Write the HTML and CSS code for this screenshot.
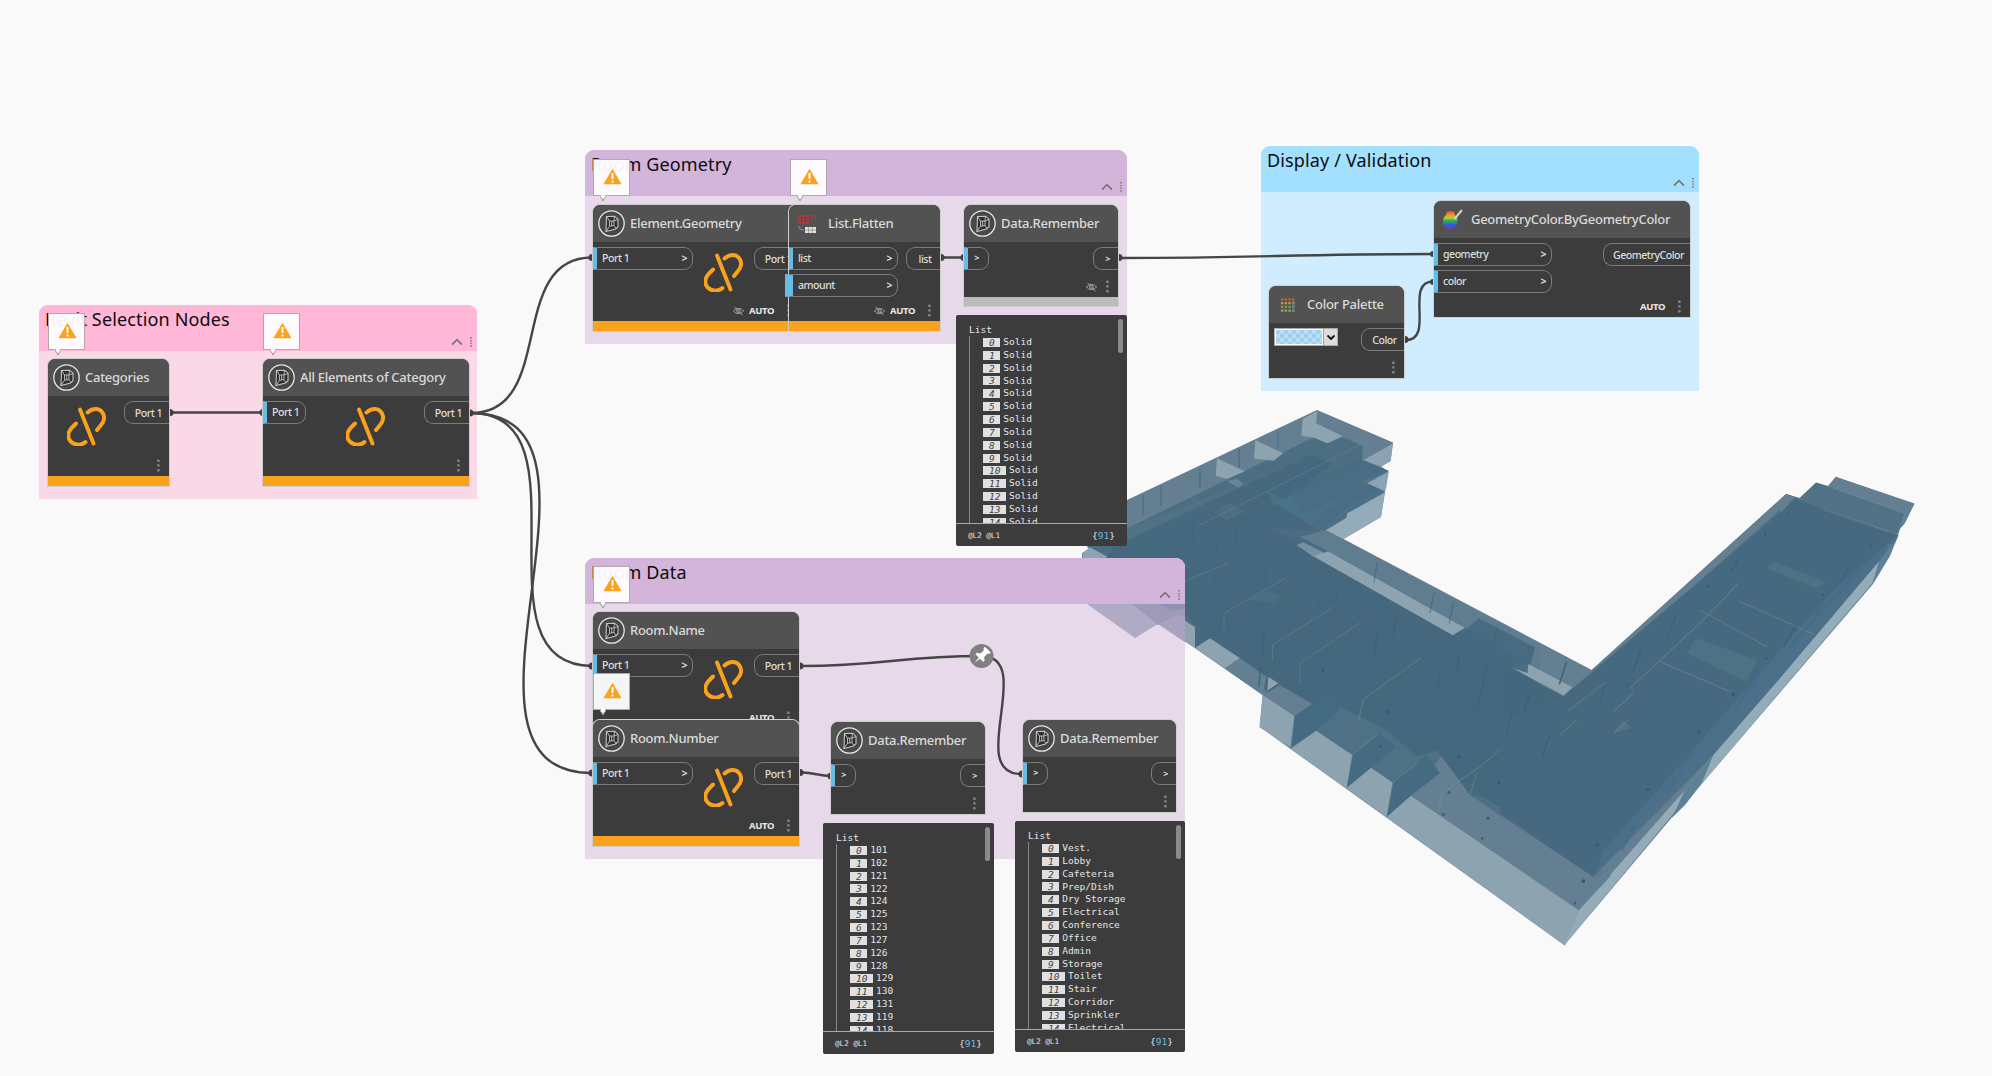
FILE: index.html
```html
<!DOCTYPE html>
<html lang="en">
<head>
<meta charset="utf-8">
<title>Room graph</title>
<link rel="stylesheet" href="styles.css">
</head>
<body>
<svg class="defs" width="0" height="0" aria-hidden="true">
  <defs>
    <linearGradient id="rainbow" x1="0" y1="0" x2="0" y2="1">
      <stop offset="0" stop-color="#e8402c"/><stop offset=".2" stop-color="#f0902c"/><stop offset=".38" stop-color="#b8d030"/><stop offset=".55" stop-color="#2fae4a"/><stop offset=".75" stop-color="#2c5fe0"/><stop offset="1" stop-color="#7a2fd0"/>
    </linearGradient>
    <pattern id="checks" width="8" height="8" patternUnits="userSpaceOnUse"><rect width="8" height="8" fill="#b9def7"/><path d="M0 0h4v4H0zM4 4h4v4H4z" fill="#a3cfec"/></pattern>
    <symbol id="pkg" viewBox="0 0 27 27">
      <circle cx="13.500" cy="13.500" r="12.700" fill="#484848" stroke="#e6e6e6" stroke-width="1.300"/>
      <path d="M8.500 6.500l8-.3 3.500 3v7.500l-2.500 2.300-9.500 2.500z" fill="#2e2e2e" stroke="#c4c4c4" stroke-width="1.100"/>
      <path d="M11.500 11h4.500v4.500l-4.500 .8zM8.500 6.500l3 4.500M16 11L16.500 6.200M16 15.500l2 3.200M11.500 16.300L8 21.500M16 11l4-1.500M13.700 11v5" fill="none" stroke="#c4c4c4" stroke-width=".9"/>
    </symbol>
    <symbol id="unlink" viewBox="0 0 39 39">
      <g fill="none" stroke="#faa21b" stroke-width="3.900" stroke-linecap="round">
        <path d="M13 2.500L26.500 36.500"/><path d="M20.500 5.500C26 .5 33 1 36 6.500c2.600 5 .6 8.500-2 11.500l-4 5"/><path d="M9 16.500L4.500 21C.5 26-.3 30.500 4 34.800c4.500 4 11 3.500 14.500.2"/>
      </g>
    </symbol>
    <symbol id="warn" viewBox="0 0 19 17"><path d="M9.500.7L18.600 16.300H.4z" fill="#faa21b"/><path d="M9.500 5v6M9.500 12.500v2" stroke="#fff" stroke-width="1.900"/></symbol>
    <symbol id="dots" viewBox="0 0 3 13"><path d="M.2.5h2.400v2.400H.2zM.2 5.200h2.400v2.400H.2zM.2 10h2.400v2.400H.2z" fill="#858585"/></symbol>
    <symbol id="hdots" viewBox="0 0 3 10"><path d="M0 0h2v1.500H0zM0 3h2v1.200H0zM0 5.600h2v1.200H0zM0 8.300h2v1.500H0z" fill="#858585"/></symbol>
    <symbol id="up" viewBox="0 0 12 8"><path d="M1 6.700L6 1.700l5 5" fill="none" stroke="#777" stroke-width="1.800"/></symbol>
    <symbol id="eye" viewBox="0 0 11 10"><path d="M.5 5C3 1.500 8 1.500 10.500 5 8 8.500 3 8.500.5 5zM1.500.8l8 8.500" fill="none" stroke="#aaa" stroke-width=".9"/><circle cx="5.500" cy="5" r="1.800" fill="none" stroke="#aaa" stroke-width=".9"/></symbol>
  </defs>
</svg>

<main class="canvas">
  <svg class="layer" viewBox="0 0 1992 1076">
    <path fill="#637f91" d="M1127 500L1317 410 1393 442.500 1390.500 461 1381 466.500 1388.500 471.500 1385 491 1381 517 1343.500 539 1591.700 670 1786 494 1800 498 1816 482.500 1828 486 1836 477 1914.500 503.500 1905 523 1897 532 1898.500 535 1890 556 1873 584 1687 801 1684 803 1564.500 945 1260 727 1262.500 695 1150 617 1082 565V553L1092 548 1080 540z"/>
    <g transform="translate(1080 400) scale(.33333)">
      <path fill="#4c6e83" d="M100 405L700 113 742 130 785 110 848 138 846 180 926 213 840 245 916 275 737 392 570 385 1380 820V1020H780L640 945 315 660 20 440z"/>
      <path fill="#54758a" d="M130 390L530 235 700 160 560 270 130 480z" opacity=".6"/>
      <path fill="#44677d" d="M100 440L690 165 760 190 590 315 1380 790V1020H850L640 945 345 675 315 640 80 470z" opacity=".8"/>
      <path fill="#4a728c" d="M580 310L860 185 926 213 840 240 915 275 800 335 740 390 660 350z" opacity=".85"/>
      <path fill="#456a80" d="M625 270L840 180 925 213 860 250 670 345zM820 265L850 242 900 268 800 320 737 385 700 365z" opacity=".5"/>
      <path fill="#8ba3b2" d="M939 130L932 183 903 200 850 180zM926 215L918 268 912 272 862 250z"/>
      <path fill="#637f91" d="M860 96L939 130 850 180z"/>
      <path fill="#94abb9" d="M915 277L903 350 790 417 737 391 798 355 802 340z"/>
      <path fill="#8ea3b0" d="M668 57L712 32 709 70 790 108 742 130 703 113 664 107zM526 121L610 160 580 182 522 176zM411 175L494 214 440 237 407 227z"/>
      <path fill="#637f91" d="M712 32L861 96 820 124 709 70z"/>
      <path fill="#7b93a3" d="M440 243L470 236 490 250 475 263z" opacity=".6"/>
      <path fill="#76909f" d="M650 435L670 427 735 460 700 470z"/>
      <path fill="#8ea3b0" d="M700 469L745 454 1155 683 1118 706zM1340 790L1380 812V850L1297 803z"/>
      <path fill="#5f7d8f" d="M737 391L820 435 1105 592 1380 735V812L1155 683 745 454 660 410z"/>
      <path fill="#456a80" d="M1197 655L1365 742 1345 820 1250 790 1120 720z" opacity=".93"/>
      <path fill="#8ea3b0" d="M345 682V744L315 725V662zM390 715L480 775 435 805 345 744z"/>
      <path fill="#456a80" d="M345 682L390 714 345 743z"/>
      <path fill="#637f91" d="M480 775L560 830 548 885 435 805z"/>
      <path fill="#8ea3b0" d="M8 458L30 442 82 470 50 490 8 480z"/>
      <path fill="#557588" d="M510 600L555 570 605 590 590 612zM400 335L450 310 500 335 440 360zM560 270L620 300 580 320z" opacity=".45"/>
      <path fill="none" stroke="#6d8da0" stroke-width="3" d="M315 543L445 490M432 690V640L618 533M578 780V735L765 618M660 850V790L845 665M838 960L845 900 1030 765M355 377L530 290 850 130M820 122L861 97 856 150M305 275L380 325" opacity=".45"/>
      <path fill="none" stroke="#376482" stroke-width="4" d="M190 285v60M243 258v60M360 205v58M478 146v55M594 95v50M338 375v55M467 385v60M584 322v55M410 415v50M556 502v60M404 510v55M716 595l-4 50M772 560l-4 45M892 485l-10 62M1062 577l-12 62M1120 605l-12 66M948 658l-8 50M892 695l-8 70M552 698l-4 68M542 800l-6 60M1140 765l-9 50M1085 807l-15 68M1254 675l-12 64M1348 884l-14 50M1296 930l-16 70" opacity=".55"/>
    </g>
    <g transform="translate(1240 600) scale(.33333)">
      <path fill="#4f7186" d="M163 348L240 300 420 300 620 450 512 587 458 548z"/>
      <path fill="#44687e" d="M300 320L440 390 530 470 590 450 690 585 1060 830 1240 620 1140 330 970 285 620 130 160 280z"/>
      <path fill="#637f91" d="M119 255L232 320 163 348 68 285zM592 525L632 552 605 580 690 587 1060 830 1015 930 512 587z"/>
      <path fill="#8ea3b0" d="M85 231L115 250 82 272zM68 285L163 348 152 443 58 382zM228 392L337 465 320 566 152 447zM393 503L458 548 440 652 320 565zM512 587L1015 930 975 1037 440 652zM865 192L997 262 970 287 862 225z"/>
      <path fill="#456b82" d="M163 348L280 270 300 330 228 392 152 443zM337 465L420 402 470 440 393 503 320 562zM458 548L560 465 600 520 512 587 440 650z"/>
      <path fill="#587789" d="M690 585L730 590 1105 826 1060 832z" opacity=".6"/>
      <path fill="none" stroke="#7897a8" stroke-width="3" d="M337 465L410 405M458 548L535 487M163 348L152 440M337 465L320 560M458 548L440 648M595 635L607 578 720 500 880 365M690 585L710 520M355 365L370 298 545 172M985 333L1100 240M965 405L1010 362" opacity=".5"/>
      <path fill="none" stroke="#356380" stroke-width="4" d="M468 58l-10 50M413 97l-10 65M658 165l-8 55M603 208l-14 65M745 180l-35 150M867 285l-13 50M816 330l-16 70M933 400l-24 68M980 185l-22 68M1097 247l-16 60M72 98l-5 65M62 200l-5 60" opacity=".6"/>
      <g fill="#31596f" opacity=".8"><circle cx="248" cy="212" r="4"/><circle cx="441" cy="335" r="5"/><circle cx="422" cy="440" r="4"/><circle cx="657" cy="470" r="5"/><circle cx="776" cy="548" r="5"/><circle cx="627" cy="578" r="5"/><circle cx="744" cy="655" r="5"/><circle cx="610" cy="643" r="5"/><circle cx="727" cy="715" r="4"/><circle cx="1073" cy="735" r="5"/><circle cx="1030" cy="844" r="5"/><circle cx="1005" cy="910" r="4"/></g>
    </g>
    <g transform="translate(1500 460) scale(.33333)">
      <path fill="#507186" d="M275 632L845 150 860 102 960 140 1195 225 1130 320 645 880 280 1250 0 1060V790L190 710z"/>
      <path fill="#637f91" d="M275 630L858 102 885 112 845 155 190 708z"/>
      <path fill="#4e7086" d="M285 640L840 150 860 200 330 680z"/>
      <path fill="#44687e" d="M190 710L840 160 885 115 1190 225 1040 390 640 820 280 1250 0 1060V620z" opacity=".8"/>
      <path fill="#507186" d="M948 68L1000 85 1215 160 1195 222 960 140 898 115z"/>
      <path fill="#637f91" d="M1007 50L1243 132 1212 192 1190 218 1215 160 985 78z"/>
      <path fill="#4b7089" d="M1195 225L1160 290 640 885 500 1010 280 1250 310 1170 500 960 700 730 1000 390z" opacity=".9"/>
      <path fill="#94abb9" d="M1138 303L1118 368 560 1025 550 1025 193 1456 235 1352 555 990 640 885 840 655z"/>
      <path fill="#5f8196" d="M1195 230L1160 290 1118 370 1138 303zM555 990L640 885 605 970 555 1035 515 1075zM235 1352L280 1270 350 1200 330 1250z"/>
      <path fill="#587a8c" d="M820 305L980 365 950 385 800 325zM590 535L770 600 740 665 560 580z" opacity=".5"/>
      <path fill="#62808f" d="M370 780L395 805 340 820z" opacity=".4"/>
      <path fill="none" stroke="#7898a9" stroke-width="4" d="M715 423L945 524M1000 85L1215 160 1205 190M960 145L1165 215M1160 250l8 5-4 15M205 752L320 665M340 755L400 700M390 685L620 470 715 370M480 605L690 695M600 450L800 560M180 825L230 780M340 820L385 780" opacity=".35"/>
      <path fill="none" stroke="#3f6b88" stroke-width="8" d="M1065 340L870 560M970 405L945 470M598 817L550 920 500 1000M443 988L415 1060M400 1100L365 1170M800 595L700 760" opacity=".5"/>
      <path fill="none" stroke="#31607d" stroke-width="4" d="M868 152l-8 20M712 300l-18 36M528 470l-28 65M425 567l-26 65M318 668l-18 60M1117 244l-6 20M1045 322l-23 42M887 497l-34 62M200 605l-22 68M88 705l-16 50M37 750l-18 72M152 820l-25 68M387 668l-10 15" opacity=".7"/>
      <g fill="#31596f" opacity=".8"><circle cx="796" cy="222" r="4"/><circle cx="626" cy="380" r="4"/><circle cx="700" cy="703" r="5"/><circle cx="970" cy="405" r="4"/><circle cx="799" cy="595" r="4"/><circle cx="598" cy="817" r="5"/><circle cx="444" cy="988" r="5"/><circle cx="292" cy="1155" r="5"/><circle cx="250" cy="1263" r="5"/></g>
    </g>
  </svg>

  <section class="group pink" style="left:39px;top:305px;width:438px;height:194px"><header><h2>Revit Selection Nodes</h2><div class="tools"><svg width="12" height="8"><use href="#up"/></svg><svg width="3" height="10"><use href="#hdots"/></svg></div></header></section>
  <section class="group purple" style="left:585px;top:150px;width:542px;height:194px"><header><h2>Room Geometry</h2><div class="tools"><svg width="12" height="8"><use href="#up"/></svg><svg width="3" height="10"><use href="#hdots"/></svg></div></header></section>
  <section class="group purple" style="left:585px;top:558px;width:600px;height:301px"><header><h2>Room Data</h2><div class="tools"><svg width="12" height="8"><use href="#up"/></svg><svg width="3" height="10"><use href="#hdots"/></svg></div></header></section>
  <section class="group blue" style="left:1261px;top:146px;width:438px;height:245px"><header><h2>Display / Validation</h2><div class="tools"><svg width="12" height="8"><use href="#up"/></svg><svg width="3" height="10"><use href="#hdots"/></svg></div></header></section>

  <svg class="layer" viewBox="0 0 1992 1076">
    <path fill="#b0abc5" d="M1087 604H1185V642L1158 624 1135 638z"/>
    <path fill="#9e9bba" d="M1132 604H1185V617L1178 615 1158 625z"/>
    <path fill="#9391b2" d="M1160 604H1185V609L1171 611z"/>
    <path fill="#a9a3bf" d="M1178 615L1185 618V642L1158 624z"/>
    <g fill="none" stroke="#454545" stroke-width="2.400">
      <path d="M171 412.500H262"/>
      <path d="M471 413C557 413 506 257.500 592 257.500"/>
      <path d="M471 413C594 413 469 666 592 666"/>
      <path d="M471 413C638 413 425 773 592 773"/>
      <path d="M942 257.500H963M1120 258C1261 258 1292 254 1433 254M1406 340C1435 340 1404 281.500 1433 281.500"/>
      <path d="M802 666C882 666 901 656 981 656C1037 656 965 774 1021 774M802 772.500C815 772.500 818 776 831 776"/>
    </g>
    <g fill="#3f3f3f"><circle cx="170" cy="412.500" r="3.500"/><circle cx="263" cy="412.500" r="3.500"/><circle cx="470" cy="413" r="3.500"/><circle cx="592" cy="257.500" r="3.500"/><circle cx="592" cy="666" r="3.500"/><circle cx="592" cy="773" r="3.500"/><circle cx="941" cy="257.500" r="3.500"/><circle cx="964" cy="257.500" r="3.500"/><circle cx="1119" cy="257.500" r="3.500"/><circle cx="1433" cy="254" r="3"/><circle cx="1405" cy="339.500" r="3.500"/><circle cx="1433" cy="282" r="3"/><circle cx="800" cy="666" r="3.500"/><circle cx="800" cy="772.500" r="3.500"/><circle cx="831" cy="776" r="3.500"/><circle cx="1022" cy="774" r="3.500"/></g>
    <circle cx="981.500" cy="656" r="12" fill="#808080"/>
    <path transform="translate(981.500 656) rotate(45)" fill="#fff" d="M-4-9h8v2.200l-1.500 1v4.600l3 2.200v2h-4.700L0 10-.8 3h-4.700V1l3-2.200v-4.600l-1.500-1z"/>
  </svg>

  <article class="node" style="left:47px;top:358px;width:123px;height:129px">
    <header><svg width="27" height="27"><use href="#pkg"/></svg><h3>Categories</h3></header>
    <div class="body"><div class="ports"><div class="mid"><svg width="39" height="39"><use href="#unlink"/></svg></div><div class="out"><span class="port" style="width:45px">Port 1</span></div></div>
    <footer><svg width="3" height="13"><use href="#dots"/></svg></footer></div><div class="bar"></div>
  </article>
  <article class="node" style="left:262px;top:358px;width:208px;height:129px">
    <header><svg width="27" height="27"><use href="#pkg"/></svg><h3>All Elements of Category</h3></header>
    <div class="body"><div class="ports"><div class="in"><span class="port" style="width:43px">Port 1</span></div><div class="mid"><svg width="39" height="39"><use href="#unlink"/></svg></div><div class="out"><span class="port" style="width:45px">Port 1</span></div></div>
    <footer><svg width="3" height="13"><use href="#dots"/></svg></footer></div><div class="bar"></div>
  </article>
  <article class="node" style="left:592px;top:204px;width:208px;height:128px">
    <header><svg width="27" height="27"><use href="#pkg"/></svg><h3>Element.Geometry</h3></header>
    <div class="body"><div class="ports"><div class="in"><span class="port" style="width:100px">Port 1<b>&gt;</b></span></div><div class="mid"><svg width="39" height="39"><use href="#unlink"/></svg></div><div class="out"><span class="port" style="width:45px">Port 1</span></div></div>
    <footer><svg width="11" height="10"><use href="#eye"/></svg><em>AUTO</em><svg width="3" height="13"><use href="#dots"/></svg></footer></div><div class="bar"></div>
  </article>
  <article class="node" style="left:788px;top:204px;width:153px;height:128px">
    <header><svg class="wide-icon" width="20" height="20" viewBox="0 0 20 20"><path d="M1 1h11v9H1z" fill="#b23b3b"/><path d="M15 6V1.500h3V6" fill="none" stroke="#9a4545" stroke-width="1.300"/><path d="M1 4h11M1 7h11M4.500 1v9M8.500 1v9" stroke="#534848" stroke-width=".9"/><path d="M2 12c0 3 2 4 5 4" fill="none" stroke="#4a86b8" stroke-width="1.500"/><path d="M8 13h11v6H8z" fill="#e3e3e3"/><path d="M8 16h11M11.700 13v6M15.300 13v6" stroke="#777" stroke-width=".6"/></svg><h3>List.Flatten</h3></header>
    <div class="body"><div class="ports"><div class="in"><span class="port" style="width:109px">list<b>&gt;</b></span><span class="port wide" style="width:113px">amount<b>&gt;</b></span></div><div class="out"><span class="port" style="width:34px">list</span></div></div>
    <footer><svg width="11" height="10"><use href="#eye"/></svg><em>AUTO</em><svg width="3" height="13"><use href="#dots"/></svg></footer></div><div class="bar"></div>
  </article>
  <article class="node" style="left:963px;top:204px;width:156px;height:103px">
    <header><svg width="27" height="27"><use href="#pkg"/></svg><h3>Data.Remember</h3></header>
    <div class="body"><div class="ports"><div class="in"><span class="port chev" style="width:25px">&gt;</span></div><div class="out"><span class="port chev" style="width:25px">&gt;</span></div></div>
    <footer><svg width="11" height="10"><use href="#eye"/></svg><svg width="3" height="13"><use href="#dots"/></svg></footer></div><div class="bar gray"></div>
  </article>
  <article class="node" style="left:1268px;top:285px;width:137px;height:94px">
    <header><svg class="pal-icon" width="14" height="14" viewBox="0 0 14 14"><g stroke-width="2.200" stroke-dasharray="2.400 1.300"><path d="M0 1.500h14" stroke="#c9644c"/><path d="M0 5.200h14" stroke="#d0983c"/><path d="M0 8.900h14" stroke="#76a53e"/><path d="M0 12.600h14" stroke="#9dab40"/></g><path d="M12.300 3v10" stroke="#3f86c4" stroke-width="2" stroke-dasharray="2.600 1.100"/></svg><h3>Color Palette</h3></header>
    <div class="body"><div class="ports"><div class="picker"><svg width="46" height="14"><rect width="46" height="14" fill="url(#checks)"/></svg><i><svg width="8" height="5"><path d="M.5.500L4 4 7.500.500" fill="none" stroke="#000" stroke-width="1.800"/></svg></i></div><div class="out"><span class="port" style="width:43px">Color</span></div></div>
    <footer><svg width="3" height="13"><use href="#dots"/></svg></footer></div>
  </article>
  <article class="node" style="left:1433px;top:200px;width:258px;height:118px">
    <header><svg class="geo-icon" width="22" height="22" viewBox="0 0 22 22"><path d="M4.500 3C6 1.500 11 1.500 12.500 3v2.500c3 2.500 4 6 2.500 9.500-1.500 3.500-4 5-6.500 5S2.500 18 1.500 15C.2 11.500 1.500 8 4.500 5.500z" fill="url(#rainbow)"/><path d="M20 1l-7.500 9" stroke="#d0d0d0" stroke-width="2"/></svg><h3>GeometryColor.ByGeometryColor</h3></header>
    <div class="body"><div class="ports"><div class="in"><span class="port" style="width:118px">geometry<b>&gt;</b></span><span class="port" style="width:118px">color<b>&gt;</b></span></div><div class="out"><span class="port" style="width:87px">GeometryColor</span></div></div>
    <footer><em>AUTO</em><svg width="3" height="13"><use href="#dots"/></svg></footer></div>
  </article>
  <article class="node" style="left:592px;top:611px;width:208px;height:128px">
    <header><svg width="27" height="27"><use href="#pkg"/></svg><h3>Room.Name</h3></header>
    <div class="body"><div class="ports"><div class="in"><span class="port" style="width:100px">Port 1<b>&gt;</b></span></div><div class="mid"><svg width="39" height="39"><use href="#unlink"/></svg></div><div class="out"><span class="port" style="width:45px">Port 1</span></div></div>
    <footer><em>AUTO</em><svg width="3" height="13"><use href="#dots"/></svg></footer></div><div class="bar"></div>
  </article>
  <article class="node" style="left:592px;top:719px;width:208px;height:128px">
    <header><svg width="27" height="27"><use href="#pkg"/></svg><h3>Room.Number</h3></header>
    <div class="body"><div class="ports"><div class="in"><span class="port" style="width:100px">Port 1<b>&gt;</b></span></div><div class="mid"><svg width="39" height="39"><use href="#unlink"/></svg></div><div class="out"><span class="port" style="width:45px">Port 1</span></div></div>
    <footer><em>AUTO</em><svg width="3" height="13"><use href="#dots"/></svg></footer></div><div class="bar"></div>
  </article>
  <article class="node" style="left:830px;top:721px;width:156px;height:94px">
    <header><svg width="27" height="27"><use href="#pkg"/></svg><h3>Data.Remember</h3></header>
    <div class="body"><div class="ports"><div class="in"><span class="port chev" style="width:25px">&gt;</span></div><div class="out"><span class="port chev" style="width:25px">&gt;</span></div></div>
    <footer><svg width="3" height="13"><use href="#dots"/></svg></footer></div>
  </article>
  <article class="node" style="left:1022px;top:719px;width:155px;height:94px">
    <header><svg width="27" height="27"><use href="#pkg"/></svg><h3>Data.Remember</h3></header>
    <div class="body"><div class="ports"><div class="in"><span class="port chev" style="width:25px">&gt;</span></div><div class="out"><span class="port chev" style="width:25px">&gt;</span></div></div>
    <footer><svg width="3" height="13"><use href="#dots"/></svg></footer></div>
  </article>

  <aside class="preview" style="left:956px;top:315px">
    <div class="list"><p>List</p><ol><li><i>0</i>Solid</li><li><i>1</i>Solid</li><li><i>2</i>Solid</li><li><i>3</i>Solid</li><li><i>4</i>Solid</li><li><i>5</i>Solid</li><li><i>6</i>Solid</li><li><i>7</i>Solid</li><li><i>8</i>Solid</li><li><i>9</i>Solid</li><li><i>10</i>Solid</li><li><i>11</i>Solid</li><li><i>12</i>Solid</li><li><i>13</i>Solid</li><li><i>14</i>Solid</li></ol><div class="thumb"></div></div>
    <footer><span>@L2 @L1</span><strong>{<b>91</b>}</strong></footer>
  </aside>
  <aside class="preview" style="left:823px;top:823px">
    <div class="list"><p>List</p><ol><li><i>0</i>101</li><li><i>1</i>102</li><li><i>2</i>121</li><li><i>3</i>122</li><li><i>4</i>124</li><li><i>5</i>125</li><li><i>6</i>123</li><li><i>7</i>127</li><li><i>8</i>126</li><li><i>9</i>128</li><li><i>10</i>129</li><li><i>11</i>130</li><li><i>12</i>131</li><li><i>13</i>119</li><li><i>14</i>118</li></ol><div class="thumb"></div></div>
    <footer><span>@L2 @L1</span><strong>{<b>91</b>}</strong></footer>
  </aside>
  <aside class="preview" style="left:1015px;top:821px;width:170px">
    <div class="list"><p>List</p><ol><li><i>0</i>Vest.</li><li><i>1</i>Lobby</li><li><i>2</i>Cafeteria</li><li><i>3</i>Prep/Dish</li><li><i>4</i>Dry Storage</li><li><i>5</i>Electrical</li><li><i>6</i>Conference</li><li><i>7</i>Office</li><li><i>8</i>Admin</li><li><i>9</i>Storage</li><li><i>10</i>Toilet</li><li><i>11</i>Stair</li><li><i>12</i>Corridor</li><li><i>13</i>Sprinkler</li><li><i>14</i>Electrical</li></ol><div class="thumb"></div></div>
    <footer><span>@L2 @L1</span><strong>{<b>91</b>}</strong></footer>
  </aside>

  <div class="alert" style="left:48px;top:313px"><svg width="19" height="17"><use href="#warn"/></svg></div>
  <div class="alert" style="left:263px;top:313px"><svg width="19" height="17"><use href="#warn"/></svg></div>
  <div class="alert" style="left:593px;top:159px"><svg width="19" height="17"><use href="#warn"/></svg></div>
  <div class="alert" style="left:790px;top:159px"><svg width="19" height="17"><use href="#warn"/></svg></div>
  <div class="alert" style="left:593px;top:566px"><svg width="19" height="17"><use href="#warn"/></svg></div>
  <div class="alert" style="left:593px;top:673px"><svg width="19" height="17"><use href="#warn"/></svg></div>
</main>
</body>
</html>
```
FILE: styles.css
```css
* { box-sizing: border-box; }
body { margin: 0; background: #f9f9f9; font-family: "Noto Sans", "Open Sans", sans-serif; }
svg { display: block; flex: none; }
h2, h3, p, ol { margin: 0; padding: 0; font-weight: 400; }
.defs { position: absolute; }
.canvas { position: relative; width: 1992px; height: 1076px; overflow: hidden; }
.layer { position: absolute; left: 0; top: 0; width: 1992px; height: 1076px; }

.group { position: absolute; border-radius: 9px 9px 0 0; overflow: hidden; }
.group > header { height: 46px; display: flex; justify-content: space-between; padding: 0 4px 0 6px; }
.group h2 { font: 400 18px/28px "Noto Sans", sans-serif; letter-spacing: .15px; color: #0c0c0c; white-space: nowrap; }
.tools { display: flex; align-items: center; gap: 7px; align-self: flex-end; padding-bottom: 4px; }
.pink { background: #fbd8e8; } .pink > header { background: #ffb6d7; }
.purple { background: #e7d9ea; } .purple > header { background: #d3b5db; }
.blue { background: #d0edff; } .blue > header { background: #a3e0ff; }

.node { position: absolute; display: flex; flex-direction: column; border: 1px solid rgba(255,255,255,.75); border-radius: 8px 8px 0 0; background: #3c3c3c; color: #dcdcdc; overflow: hidden; }
.node:has(.wide) { overflow: visible; }
.node > header { height: 37px; flex: none; display: flex; align-items: center; gap: 5px; padding-left: 5px; background: #525252; border-radius: 7px 7px 0 0; }
.node h3 { font: 500 13px/20px "Noto Sans", sans-serif; letter-spacing: -.27px; color: #dadada; white-space: nowrap; padding-bottom: 2px; }
.wide-icon { margin: 0 6px 0 3px; }
.pal-icon { margin: 0 7px 0 7px; }
.geo-icon { margin: 0 2px 0 3px; }
.body { flex: 1; display: flex; flex-direction: column; justify-content: space-between; min-height: 0; }
.ports { display: flex; justify-content: space-between; padding-top: 5px; height: 51px; }
.in, .out { display: flex; flex-direction: column; gap: 4px; }
.in { align-items: flex-end; }
.mid { flex: 1; display: flex; justify-content: center; padding-top: 6px; }
.port { height: 23px; display: flex; align-items: center; justify-content: space-between; font: 500 10.6px/20px "Noto Sans", sans-serif; letter-spacing: -.5px; border: 1px solid #7b7b7b; white-space: nowrap; }
.in .port { border-left: 4px solid #67bce6; border-radius: 0 9px 9px 0; padding: 0 5px 2px; }
.in .wide { border-left-width: 8px; margin-left: -4px; }
.out .port { border-right: 0; border-radius: 9px 0 0 9px; justify-content: center; padding-left: 3px; }
.port b { font-weight: 700; }
.port.chev { justify-content: center; font-weight: 700; font-size: 9px; }
.in .port.chev { padding: 0 4px 2px 1px; }
.body > footer { display: flex; align-items: center; justify-content: flex-end; height: 13px; margin-bottom: 4px; padding-right: 9px; gap: 5px; }
.body > footer em { font: 700 9.5px/13px "Noto Sans", sans-serif; letter-spacing: -.4px; color: #e8e8e8; margin-right: 8px; }
.body > footer svg:first-child:not(:last-child) + svg { margin-left: 4px; }
.bar { flex: none; height: 10px; background: #faa21b; }
.bar.gray { height: 9px; background: #bbb; }
.picker { display: flex; width: 64px; height: 18px; margin-left: 5px; border: 1px solid #aaa; background: #fff; }
.picker > svg { margin: 1px; }
.picker i { flex: 1; display: flex; align-items: center; justify-content: center; background: #ddd; border-left: 1px solid #999; }

.alert { position: absolute; width: 37px; height: 37px; display: flex; align-items: center; justify-content: center; padding: 0 0 3px 1px; background: rgba(255,255,255,.95); border: 1px solid #b0a8ae; }
.alert::after { content: ""; position: absolute; left: 6px; top: 34px; width: 5px; height: 5px; background: #fff; border: solid #888; border-width: 0 1px 1px 0; transform: scaleX(.7) rotate(45deg); }

.preview { position: absolute; width: 171px; height: 231px; display: flex; flex-direction: column; background: #3c3c3c; border-radius: 2px; color: #e4e4e4; font: 9.55px/12.85px "DejaVu Sans Mono", "Liberation Mono", monospace; }
.list { position: relative; height: 209px; overflow: hidden; padding: 9px 0 0 13px; border-bottom: 1px solid #aaa; white-space: nowrap; }
.list p { height: 12px; }
.list ol { list-style: none; border-left: 1px solid #888; padding: 0 0 4px 13px; }
.list li { display: flex; align-items: center; gap: 3.5px; height: 12.85px; }
.list i { background: #e0e0e0; color: #444; line-height: 9px; height: 9px; padding: 0 5px 0 6px; }
.thumb { position: absolute; right: 4px; top: 4px; width: 5px; height: 34px; border-radius: 3px; background: #8b8b8b; }
.preview > footer { flex: 1; display: flex; align-items: center; justify-content: space-between; padding: 2px 12px 0 12px; }
.preview > footer span { font-size: 7.6px; }
.preview > footer strong { font-weight: 400; font-size: 9.55px; }
.preview > footer b { color: #67bce6; font-weight: 400; }
```
